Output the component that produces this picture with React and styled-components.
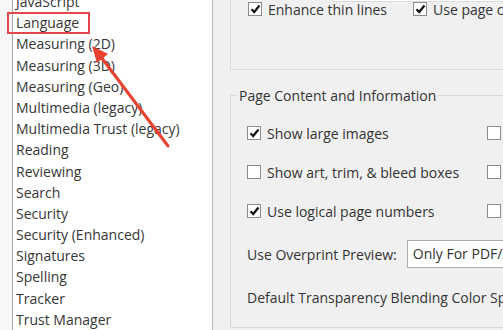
import React from "react";
import styled, { createGlobalStyle } from "styled-components";

const GlobalStyle = createGlobalStyle`
    html, body {
        margin: 0;
        padding: 0;
        overflow: hidden;
        background: #ffffff;
    }
`;

const categories = [
    "JavaScript",
    "Language",
    "Measuring (2D)",
    "Measuring (3D)",
    "Measuring (Geo)",
    "Multimedia (legacy)",
    "Multimedia Trust (legacy)",
    "Reading",
    "Reviewing",
    "Search",
    "Security",
    "Security (Enhanced)",
    "Signatures",
    "Spelling",
    "Tracker",
    "Trust Manager",
];

function Check() {
    return (
        <svg width="11" height="10" viewBox="0 0 11 10">
            <path d="M1.5 5.2 L4.2 8 L9.5 1.5" fill="none" stroke="#111" strokeWidth="2.2" />
        </svg>
    );
}

function CheckItem({ checked, label }) {
    return (
        <CheckRow>
            <Box>{checked && <Check />}</Box>
            {label && <Label>{label}</Label>}
        </CheckRow>
    );
}

export default function App() {
    return (
        <Page>
            <GlobalStyle />
            <Gutter />
            <ListPanel>
                <List>
                    {categories.map((c) => (
                        <ListItem key={c}>{c}</ListItem>
                    ))}
                </List>
                <Highlight />
                <Arrow width="200" height="170" viewBox="0 0 200 170">
                    <path d="M88 57 L155 146" stroke="#e8412f" strokeWidth="3" strokeLinecap="round" />
                    <polygon points="79,46 95,54 84,63" fill="#e8412f" />
                </Arrow>
            </ListPanel>
            <SettingsPane>
                <TopStrip />
                <TopGroup>
                    <TopRow>
                        <CheckItem checked label="Enhance thin lines" />
                        <CheckItem checked label="Use page cache" />
                    </TopRow>
                </TopGroup>
                <Group>
                    <Legend>Page Content and Information</Legend>
                    <CheckGrid>
                        <CheckItem checked label="Show large images" />
                        <CheckItem />
                        <CheckItem label="Show art, trim, & bleed boxes" />
                        <CheckItem />
                        <CheckItem checked label="Use logical page numbers" />
                        <CheckItem />
                    </CheckGrid>
                    <FieldRow>
                        <Label>Use Overprint Preview:</Label>
                        <Select>Only For PDF/X Files</Select>
                    </FieldRow>
                    <FieldRow>
                        <Label>Default Transparency Blending Color Space</Label>
                    </FieldRow>
                </Group>
            </SettingsPane>
            <EdgeStrip />
        </Page>
    );
}

const Page = styled.div`
    display: flex;
    width: 503px;
    height: 330px;
    overflow: hidden;
    font-family: "Open Sans", "Noto Sans", sans-serif;
    color: #333333;
`;

const Gutter = styled.div`
    width: 12px;
    flex-shrink: 0;
    background: #f7f7f7;
`;

const ListPanel = styled.div`
    position: relative;
    width: 199px;
    flex-shrink: 0;
    background: #ffffff;
    border-left: 1px solid #a8a8a8;
    border-right: 1px solid #b8b8b8;
`;

const List = styled.ul`
    list-style: none;
    margin: -9px 0 0;
    padding: 0 0 0 3px;
    overflow: hidden;
`;

const ListItem = styled.li`
    font-size: 14px;
    line-height: 21.2px;
    height: 21.2px;
    white-space: nowrap;
    color: #363636;
`;

const Highlight = styled.div`
    position: absolute;
    left: -6px;
    top: 12px;
    width: 79px;
    height: 18px;
    border: 2px solid #e5464b;
`;

const Arrow = styled.svg`
    position: absolute;
    left: 0;
    top: 0;
`;

const SettingsPane = styled.div`
    flex: 1;
    display: flex;
    flex-direction: column;
    background: #f0f0f0;
    padding-left: 17px;
    position: relative;
`;

const TopStrip = styled.div`
    position: absolute;
    top: 0;
    left: 120px;
    right: 0;
    height: 1px;
    background: #fdfdfd;
    border-bottom: 1px solid #dcdcdc;
`;

const TopGroup = styled.div`
    height: 70px;
    box-sizing: border-box;
    border: 1px solid #dadada;
    border-top: none;
    border-right: none;
    padding: 1px 0 0 17px;
`;

const TopRow = styled.div`
    display: grid;
    grid-template-columns: 165px 1fr;
`;

const CheckRow = styled.div`
    display: flex;
    align-items: center;
    gap: 6px;
    height: 16px;
    white-space: nowrap;
`;

const Box = styled.div`
    width: 14px;
    height: 14px;
    flex-shrink: 0;
    box-sizing: border-box;
    border: 1px solid #8c8c8c;
    background: #ffffff;
    display: flex;
    align-items: center;
    justify-content: center;
`;

const Label = styled.span`
    font-size: 14px;
    color: #333333;
    white-space: nowrap;
`;

const Group = styled.fieldset`
    margin: 16px 0 2px;
    padding: 20px 0 0 16px;
    border: 1px solid #dadada;
    border-right: none;
    border-bottom-right-radius: 4px;
    flex: 1;
    min-width: 0;
`;

const Legend = styled.legend`
    font-size: 14px;
    padding: 0 2px;
    margin-left: -10px;
    color: #333333;
`;

const CheckGrid = styled.div`
    display: grid;
    grid-template-columns: 240px 1fr;
    row-gap: 23px;
`;

const FieldRow = styled.div`
    display: flex;
    align-items: center;
    gap: 10px;
    margin-top: 21px;
    white-space: nowrap;
    & + & {
        margin-top: 20px;
    }
`;

const Select = styled.div`
    height: 28px;
    box-sizing: border-box;
    border: 1px solid #adadad;
    background: #ffffff;
    font-size: 14px;
    line-height: 26px;
    padding-left: 5px;
    flex: 1;
    white-space: nowrap;
    overflow: hidden;
`;

const EdgeStrip = styled.div`
    width: 4px;
    flex-shrink: 0;
    background: #ffffff;
`;
